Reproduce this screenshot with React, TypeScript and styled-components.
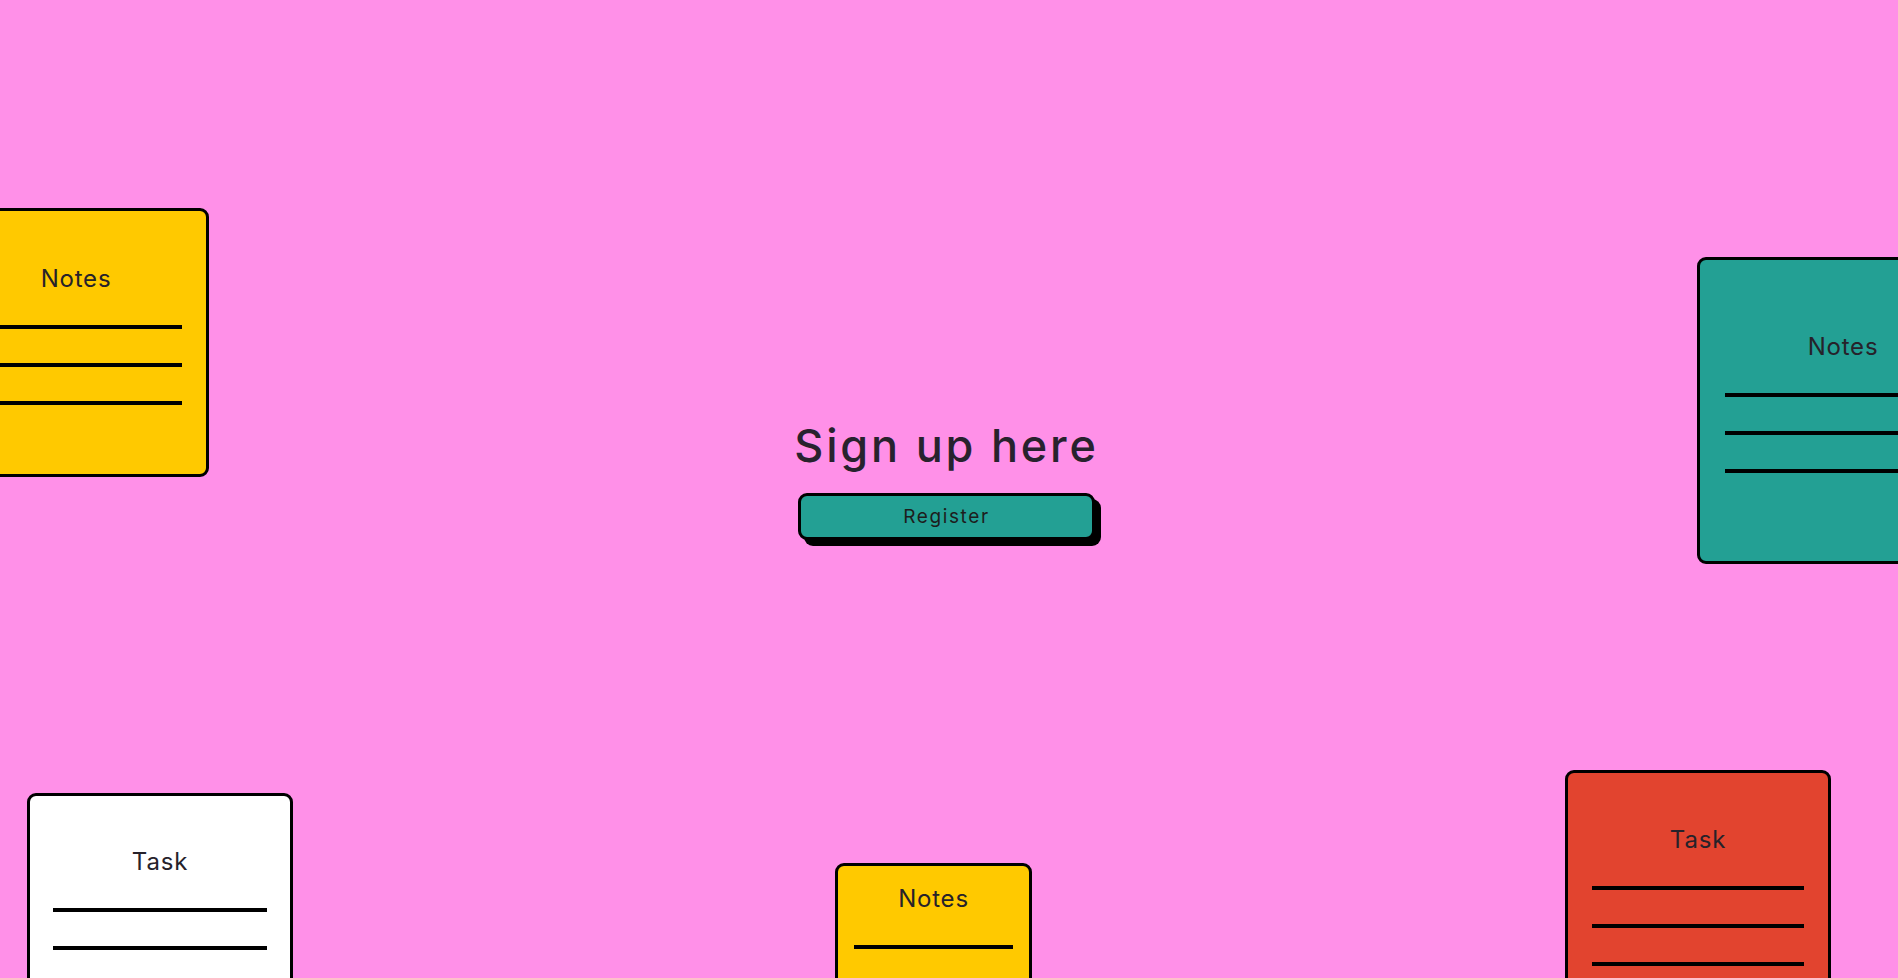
import React from "react";
import styled, { createGlobalStyle } from "styled-components";

const GlobalStyle = createGlobalStyle`
  html, body {
    margin: 0;
    padding: 0;
    background: #ff90e8;
  }
  * { box-sizing: border-box; }
`;

const Page = styled.main`
  position: relative;
  width: 100%;
  height: 100vh;
  overflow: hidden;
  background: #ff90e8;
  font-family: Inter, "Liberation Sans", sans-serif;
  color: #25212a;
`;

const Hero = styled.section`
  height: 100%;
  display: flex;
  flex-direction: column;
  align-items: center;
  justify-content: center;
  padding: 0 5px 15px 0;
  gap: 25px;
`;

const Heading = styled.h1`
  margin: 0;
  font-size: 45px;
  line-height: 1;
  font-weight: 500;
  letter-spacing: 2.8px;
  color: #28222e;
`;

const RegisterButton = styled.button`
  width: 297px;
  height: 47px;
  border: 3px solid #000;
  border-radius: 9px;
  background: #23a094;
  box-shadow: 6px 6px 0 #000;
  font-family: Inter, "Liberation Sans", sans-serif;
  font-size: 19px;
  letter-spacing: 1.6px;
  color: #1d1d1d;
  cursor: pointer;
  padding: 0;
`;

const Card = styled.div<{
  $left: number;
  $top: number;
  $w: number;
  $h: number;
  $bg: string;
  $padTop: number;
  $padX: number;
}>`
  position: absolute;
  left: ${(p) => p.$left}px;
  top: ${(p) => p.$top}px;
  width: ${(p) => p.$w}px;
  height: ${(p) => p.$h}px;
  background: ${(p) => p.$bg};
  border: 3px solid #000;
  border-radius: 9px;
  padding: ${(p) => p.$padTop}px ${(p) => p.$padX}px 0;
  display: flex;
  flex-direction: column;
  gap: 34px;
`;

const CardTitle = styled.div`
  font-size: 24px;
  line-height: 24px;
  text-align: center;
  letter-spacing: 0.8px;
  color: #26222a;
`;

const Rule = styled.div`
  height: 4px;
  background: #000;
  flex-shrink: 0;
`;

type NoteProps = {
  title: string;
  left: number;
  top: number;
  w: number;
  h: number;
  bg: string;
  padTop: number;
  padX: number;
  lines: number;
};

const Note = ({ title, left, top, w, h, bg, padTop, padX, lines }: NoteProps) => (
  <Card $left={left} $top={top} $w={w} $h={h} $bg={bg} $padTop={padTop} $padX={padX}>
    <CardTitle>{title}</CardTitle>
    {Array.from({ length: lines }).map((_, i) => (
      <Rule key={i} />
    ))}
  </Card>
);

export default function App() {
  return (
    <>
      <GlobalStyle />
      <Page>
        <Note title="Notes" left={-57} top={208} w={266} h={269} bg="#ffc900" padTop={56} padX={24} lines={3} />
        <Note title="Notes" left={1697} top={257} w={292} h={307} bg="#23a094" padTop={75} padX={25} lines={3} />
        <Note title="Task" left={27} top={793} w={266} h={269} bg="#ffffff" padTop={54} padX={23} lines={3} />
        <Note title="Notes" left={835} top={863} w={197} h={200} bg="#ffc900" padTop={21} padX={16} lines={3} />
        <Note title="Task" left={1565} top={770} w={266} h={269} bg="#e2442f" padTop={55} padX={24} lines={3} />
        <Hero>
          <Heading>Sign up here</Heading>
          <RegisterButton>Register</RegisterButton>
        </Hero>
      </Page>
    </>
  );
}
